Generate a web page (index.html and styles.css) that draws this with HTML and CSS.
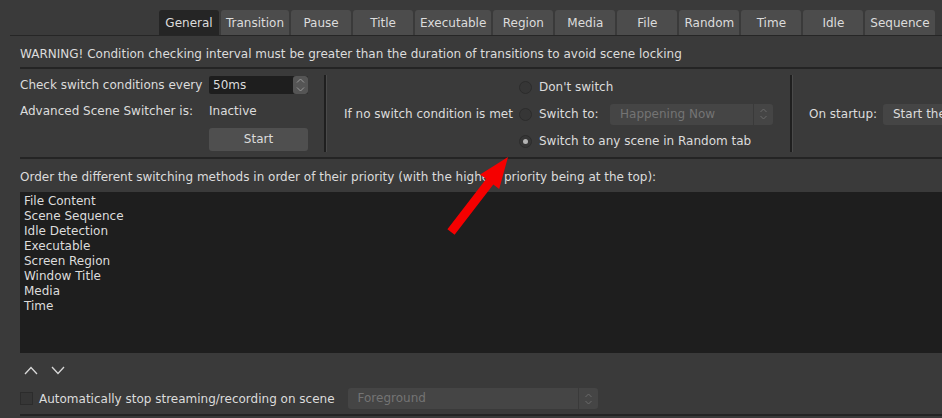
FILE: index.html
```html
<!DOCTYPE html>
<html lang="en">
  <head>
    <title>Advanced Scene Switcher - General</title>
    <meta charset="utf-8" />
    <link rel="stylesheet" href="styles.css">
  </head>
  <body>
    <div class="tabs">
      <span class="tab active">General</span>
      <span class="tab">Transition</span>
      <span class="tab">Pause</span>
      <span class="tab">Title</span>
      <span class="tab">Executable</span>
      <span class="tab">Region</span>
      <span class="tab">Media</span>
      <span class="tab">File</span>
      <span class="tab">Random</span>
      <span class="tab">Time</span>
      <span class="tab">Idle</span>
      <span class="tab">Sequence</span>
    </div>

    <div class="panel">
      <p class="warning">WARNING! Condition checking interval must be greater than the duration of transitions to avoid scene locking</p>

      <div class="group">
        <div class="column col-left">
          <span>Check switch conditions every</span>
          <span class="spinbox">
            <span class="spin-value">50ms</span>
            <span class="spin-buttons">
              <svg width="9" height="5" viewBox="0 0 9 5"><path d="M1 4.5 L4.5 1 L8 4.5" fill="none" stroke="#9a9a9a" stroke-width="1"/></svg>
              <svg width="9" height="5" viewBox="0 0 9 5"><path d="M1 0.5 L4.5 4 L8 0.5" fill="none" stroke="#9a9a9a" stroke-width="1"/></svg>
            </span>
          </span>
          <span>Advanced Scene Switcher is:</span>
          <span>Inactive</span>
          <span></span>
          <span class="button">Start</span>
        </div>

        <div class="separator"></div>

        <div class="column col-middle">
          <span class="no-switch-label">If no switch condition is met</span>
          <div class="radios">
            <div class="radio-row"><span class="radio"></span>Don't switch</div>
            <div class="radio-row">
              <span class="radio"></span><span class="switch-to-label">Switch to:</span>
              <span class="combo combo-scene disabled">
                <span class="combo-text">Happening Now</span>
                <span class="combo-arrows">
                  <svg width="7" height="12" viewBox="0 0 7 12"><path d="M0.5 4 L3.5 1 L6.5 4 M0.5 8 L3.5 11 L6.5 8" fill="none" stroke="#6a6a6a" stroke-width="1"/></svg>
                </span>
              </span>
            </div>
            <div class="radio-row"><span class="radio checked"></span>Switch to any scene in Random tab</div>
          </div>
        </div>

        <div class="separator"></div>

        <div class="column col-right">
          <span class="startup-label">On startup:</span>
          <span class="combo combo-startup">
            <span class="combo-text">Start the scene switcher if it was running</span>
          </span>
        </div>
      </div>

      <p class="list-label">Order the different switching methods in order of their priority (with the highest priority being at the top):</p>
      <ul class="priority-list">
        <li>File Content</li>
        <li>Scene Sequence</li>
        <li>Idle Detection</li>
        <li>Executable</li>
        <li>Screen Region</li>
        <li>Window Title</li>
        <li>Media</li>
        <li>Time</li>
      </ul>

      <div class="move-buttons">
        <svg width="14" height="9" viewBox="0 0 14 9"><path d="M1 8 L7 1.5 L13 8" fill="none" stroke="#d8d8d8" stroke-width="1.3"/></svg>
        <svg width="14" height="9" viewBox="0 0 14 9"><path d="M1 1 L7 7.5 L13 1" fill="none" stroke="#d8d8d8" stroke-width="1.3"/></svg>
      </div>

      <div class="auto-stop">
        <span class="checkbox"></span>
        <span class="auto-stop-label">Automatically stop streaming/recording on scene</span>
        <span class="combo combo-stop disabled">
          <span class="combo-text">Foreground</span>
          <span class="combo-arrows">
            <svg width="7" height="12" viewBox="0 0 7 12"><path d="M0.5 4 L3.5 1 L6.5 4 M0.5 8 L3.5 11 L6.5 8" fill="none" stroke="#6a6a6a" stroke-width="1"/></svg>
          </span>
        </span>
      </div>

      <div class="bottom-line"></div>
    </div>

    <!-- annotation arrow drawn over the window -->
    <svg class="annotation" width="942" height="418" viewBox="0 0 942 418">
      <polygon points="508,157 499.2,189.1 493.3,184.5 454.6,234.7 447.4,229.3 486.1,179.1 480.2,174.5" fill="#f50000"/>
    </svg>
  </body>
</html>
```

FILE: styles.css
```css
html, body {
  margin: 0;
  width: 942px;
  height: 418px;
  overflow: hidden;
}

body {
  position: relative;
  background-color: #3a3a3a;
  color: #dcdcdc;
  font-family: 'DejaVu Sans', 'Noto Sans', sans-serif;
  font-size: 12px;
  line-height: 17px;
}

p {
  margin: 0;
}

/* tab bar */
.tabs {
  display: flex;
  gap: 2px;
  padding: 10px 0 0 159px;
  height: 25px;
}

.tab {
  min-width: 60px;
  height: 25px;
  box-sizing: border-box;
  padding: 1px 5px 0;
  line-height: 24px;
  text-align: center;
  white-space: nowrap;
  background-color: #4c4c4c;
  border-radius: 3px 3px 0 0;
}

.tab.active {
  background-color: #252525;
}

/* main panel */
.panel {
  margin-left: 10px;
  padding-left: 10px;
  border-top: 1px solid #262626;
  width: 1000px;
}

.warning {
  padding-top: 10px;
  white-space: nowrap;
}

.group {
  display: flex;
  margin-top: 4px;
  height: 88px;
  border-top: 2px solid #242424;
  border-bottom: 2px solid #242424;
}

.column {
  flex: none;
  box-sizing: border-box;
  padding-top: 7px;
}

.col-left {
  width: 304px;
  display: grid;
  grid-template-columns: 189px 99px;
  grid-template-rows: 18px 18px 23px;
  row-gap: 8px;
  align-items: center;
  white-space: nowrap;
}

.separator {
  flex: none;
  width: 2px;
  margin: 6px 0 5px;
  background-color: #1f1f1f;
  border-right: 1px solid #4a4a4a;
}

.col-middle {
  width: 463px;
  display: flex;
  align-items: center;
  padding-left: 17px;
  padding-top: 2px;
}

.no-switch-label {
  width: 175px;
  white-space: nowrap;
}

.radios {
  display: flex;
  flex-direction: column;
  gap: 6px;
}

.radio-row {
  display: flex;
  align-items: center;
  height: 21px;
  white-space: nowrap;
}

.radio {
  flex: none;
  width: 13px;
  height: 13px;
  box-sizing: border-box;
  margin-right: 7px;
  border-radius: 50%;
  border: 1px solid #2c2c2c;
  background-color: #363636;
  display: flex;
  align-items: center;
  justify-content: center;
}

.radio.checked::after {
  content: '';
  width: 5px;
  height: 5px;
  border-radius: 50%;
  background-color: #b4b4b4;
}

.switch-to-label {
  width: 71px;
}

.col-right {
  display: flex;
  align-items: center;
  padding-left: 16px;
  padding-top: 2px;
  white-space: nowrap;
}

.startup-label {
  width: 74px;
}

/* inputs */
.spinbox {
  display: flex;
  height: 18px;
  width: 99px;
  background-color: #1e1e1e;
  border-radius: 2px;
  overflow: hidden;
}

.spin-value {
  flex: 1;
  padding-left: 4px;
  line-height: 18px;
}

.spin-buttons {
  width: 15px;
  background-color: #555555;
  display: flex;
  flex-direction: column;
  align-items: center;
  justify-content: space-around;
  border-radius: 3px;
}

.button {
  height: 23px;
  line-height: 23px;
  text-align: center;
  background-color: #4f4f4f;
  border-radius: 3px;
}

.combo {
  flex: none;
  display: flex;
  height: 21px;
  line-height: 21px;
  background-color: #454545;
  border-radius: 3px;
  overflow: hidden;
}

.combo-text {
  flex: 1;
  padding-left: 10px;
  white-space: nowrap;
  overflow: hidden;
}

.combo.disabled {
  color: #747474;
}

.combo-arrows {
  flex: none;
  width: 19px;
  border-left: 1px solid #3a3a3a;
  display: flex;
  align-items: center;
  justify-content: center;
}

.combo-scene {
  width: 163px;
}

.combo-startup {
  width: 200px;
}

.combo-stop {
  width: 250px;
  margin-left: 13px;
}

/* priority list */
.list-label {
  margin: 10px 0 6px;
  white-space: nowrap;
}

.priority-list {
  list-style: none;
  margin: 0;
  padding: 2px 0 0 4px;
  height: 161px;
  box-sizing: border-box;
  background-color: #1e1e1e;
  line-height: 15px;
}

.move-buttons {
  display: flex;
  gap: 13px;
  margin-top: 13px;
  padding-left: 4px;
  height: 9px;
}

.move-buttons svg {
  display: block;
}

.auto-stop {
  display: flex;
  align-items: center;
  margin-top: 13px;
  height: 21px;
}

.checkbox {
  width: 13px;
  height: 13px;
  box-sizing: border-box;
  margin-right: 6px;
  border: 1px solid #2c2c2c;
  background-color: #363636;
}

.auto-stop-label {
  white-space: nowrap;
  padding-top: 1px;
}

.bottom-line {
  margin-top: 5px;
  border-top: 2px solid #242424;
}

.annotation {
  position: absolute;
  left: 0;
  top: 0;
  pointer-events: none;
}
```
